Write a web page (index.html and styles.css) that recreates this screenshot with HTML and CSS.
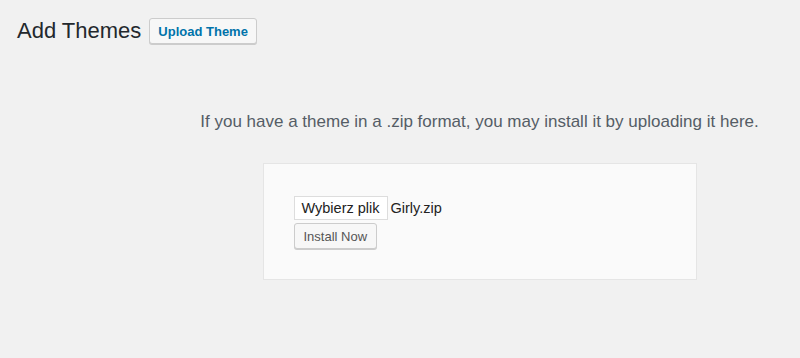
FILE: index.html
```html
<!DOCTYPE html>
<html lang="en">
<head>
  <meta charset="UTF-8" />
  <title>Add Themes</title>
  <link rel="stylesheet" href="styles.css">
</head>
<body>
  <div class="wrap">
    <div class="page-header">
      <h1>Add Themes</h1>
      <button type="button" class="upload-btn">Upload Theme</button>
    </div>

    <div class="upload-section">
      <p class="install-help">If you have a theme in a .zip format, you may install it by uploading it here.</p>
      <form class="upload-form">
        <div class="file-row">
          <span class="file-btn">Wybierz plik</span>
          <span class="file-name">Girly.zip</span>
        </div>
        <button type="button" class="install-btn">Install Now</button>
      </form>
    </div>
  </div>
</body>
</html>
```

FILE: styles.css
```css
body {
  margin: 0;
  background: #f1f1f1;
  font-family: 'Liberation Sans', Arial, sans-serif;
  color: #23282d;
}
.wrap {
  padding: 17px 17px 0 17px;
}
.page-header {
  display: flex;
  align-items: center;
  gap: 8px;
  height: 28px;
}
h1 {
  margin: 0;
  font-size: 22px;
  font-weight: 400;
  color: #23282d;
}
.upload-btn {
  font-family: inherit;
  font-size: 13px;
  font-weight: 600;
  color: #0073aa;
  background: #f7f7f7;
  border: 1px solid #ccc;
  border-radius: 3px;
  height: 26px;
  padding: 0 8px;
  box-shadow: 0 1px 0 #ccc;
}
.upload-section {
  display: flex;
  flex-direction: column;
  align-items: center;
  padding-left: 159px;
  padding-top: 66px;
}
.install-help {
  margin: 0 0 30px;
  font-size: 17px;
  line-height: 22px;
  color: #555d66;
}
.upload-form {
  box-sizing: border-box;
  width: 434px;
  height: 117px;
  padding: 32px 30px;
  background: #fafafa;
  border: 1px solid #e5e5e5;
}
.file-row {
  display: flex;
  align-items: center;
  gap: 3px;
  font-size: 14.5px;
  color: #222;
}
.file-btn {
  background: #fff;
  border: 1px solid #ddd;
  padding: 3px 7px;
  height: 16px;
  line-height: 16px;
}
.install-btn {
  margin-top: 3px;
  font-family: inherit;
  font-size: 13px;
  color: #555;
  background: #f7f7f7;
  border: 1px solid #ccc;
  border-radius: 3px;
  height: 26px;
  padding: 0 9px;
  box-shadow: 0 1px 0 #ccc;
}
```
